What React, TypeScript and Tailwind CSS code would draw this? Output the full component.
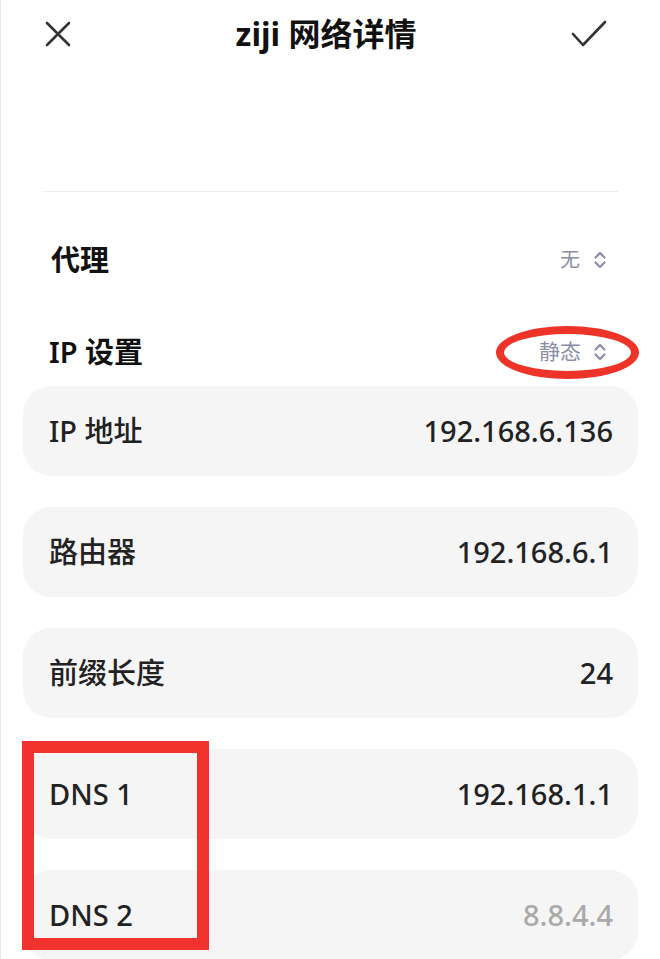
import React from 'react';

const font = { fontFamily: '"Noto Sans", "Noto Sans CJK SC", sans-serif' };

function UpDown() {
  return (
    <svg width="14" height="20" viewBox="0 0 14 20" fill="none" stroke="#8b8ea6" strokeWidth="2.2" strokeLinecap="round" strokeLinejoin="round">
      <path d="M2.5 7.5 7 3l4.5 4.5" />
      <path d="M2.5 12.5 7 17l4.5-4.5" />
    </svg>
  );
}

function Card({ label, value, muted }: { label: string; value: string; muted?: boolean }) {
  return (
    <div className="mx-[22px] flex h-[90px] items-center justify-between rounded-[28px] bg-[#f5f5f5] pl-[26px] pr-[25px]">
      <span className="text-[29px] font-medium text-[#222]">{label}</span>
      <span className={`text-[29px] font-medium ${muted ? 'text-[#a9a9a9]' : 'text-[#222]'}`}>{value}</span>
    </div>
  );
}

export default function App() {
  return (
    <div className="relative h-[959px] w-[660px] overflow-hidden bg-white border-l border-[#e8e8e8]" style={font}>
      {/* Header */}
      <div className="grid h-[68px] grid-cols-[1fr_auto_1fr] items-center pl-[44px] pr-[53px]">
        <svg width="26" height="26" viewBox="0 0 26 26" fill="none" stroke="#333" strokeWidth="2.6" strokeLinecap="round">
          <path d="M2 2l22 22M24 2 2 24" />
        </svg>
        <div className="text-[32px] font-bold text-[#111]">ziji 网络详情</div>
        <svg className="justify-self-end" width="36" height="28" viewBox="0 0 36 28" fill="none" stroke="#333" strokeWidth="2.6" strokeLinecap="round" strokeLinejoin="round">
          <path d="M2 14l10 11L34 2" />
        </svg>
      </div>

      <div className="mx-[42px] mt-[123px] border-t border-[#ececec]" />

      {/* Proxy / IP settings */}
      <div className="mt-[38px] flex h-[60px] items-center justify-between pl-[50px] pr-[53px]">
        <span className="text-[29px] font-semibold text-[#111]">代理</span>
        <span className="flex items-center gap-[13px] text-[20px] text-[#8b8ea6]">无<UpDown /></span>
      </div>
      <div className="mt-[32px] flex h-[60px] items-center justify-between pl-[48px] pr-[53px]">
        <span className="text-[29px] font-semibold text-[#111]">IP 设置</span>
        <span className="flex items-center gap-[12px] text-[21px] text-[#8b8ea6]">静态<UpDown /></span>
      </div>

      <div className="mt-[4px] flex flex-col gap-[31px]">
        <Card label="IP 地址" value="192.168.6.136" />
        <Card label="路由器" value="192.168.6.1" />
        <Card label="前缀长度" value="24" />
        <Card label="DNS 1" value="192.168.1.1" />
        <Card label="DNS 2" value="8.8.4.4" muted />
      </div>

      {/* Red annotations */}
      <div className="absolute left-[495px] top-[326px] h-[53px] w-[143px] rounded-[50%] border-[8px] border-[#ee3329]" />
      <div className="absolute left-[21px] top-[741px] h-[209px] w-[187px] border-[12px] border-[#f2322c]" />
    </div>
  );
}
